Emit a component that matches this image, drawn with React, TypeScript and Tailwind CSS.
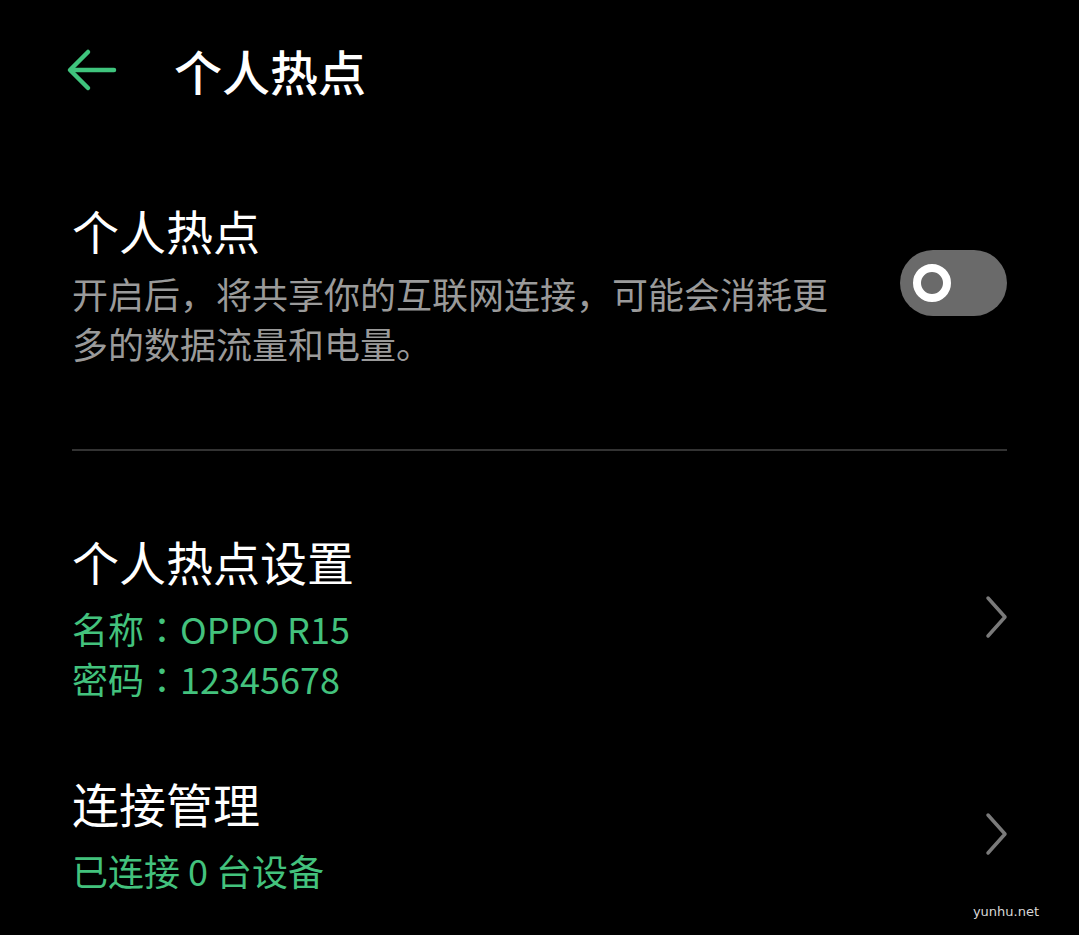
const font = { fontFamily: '"Noto Sans CJK SC", "Noto Sans", sans-serif' };
const tc = { fontFamily: '"Noto Sans CJK TC", sans-serif' };

function Toggle() {
  return (
    <div className="w-[107px] h-[66px] rounded-full bg-[#6a6a6a] flex items-center pl-[13px] shrink-0">
      <div className="w-[38px] h-[38px] rounded-full border-[8px] border-white" />
    </div>
  );
}

function Chevron() {
  return (
    <svg width="26" height="44" viewBox="0 0 26 44" fill="none" stroke="#7a7a7a" strokeWidth="3.5" strokeLinecap="round" strokeLinejoin="round" className="shrink-0 mr-[-3px]">
      <path d="M4 3L21 22L4 41" />
    </svg>
  );
}

function NavRow({ title, lines }: { title: string; lines: { label: string; value: string }[] }) {
  return (
    <div className="flex items-center justify-between">
      <div>
        <div className="text-[47px] leading-[60px] text-white">{title}</div>
        <div className="mt-[12px]">
          {lines.map((l) => (
            <div key={l.value} className="text-[36px] leading-[50px] text-[#43c27d]">
              {l.label}
              {l.label && <span style={tc}>：</span>}
              {l.value}
            </div>
          ))}
        </div>
      </div>
      <Chevron />
    </div>
  );
}

export default function App() {
  return (
    <div className="w-[1079px] h-[935px] bg-black relative overflow-hidden" style={font}>
      {/* Header */}
      <header className="flex items-center h-[142px] pl-[64px] pb-[2px]">
        <svg width="56" height="44" viewBox="0 0 56 44" fill="none" stroke="#3fc47d" strokeWidth="4.5" strokeLinecap="round" strokeLinejoin="round">
          <path d="M50 22H7" />
          <path d="M24 4L6 22L24 40" />
        </svg>
        <h1 className="ml-[54px] text-[48px] leading-none text-white font-medium">个人热点</h1>
      </header>

      <div className="px-[72px]">
        {/* Hotspot switch */}
        <section className="flex items-center justify-between pt-[56px] pb-[81px]">
          <div className="w-[765px]">
            <div className="text-[47px] leading-[64px] text-white">个人热点</div>
            <p className="text-[36px] leading-[50px] text-[#9a9a9a] mt-[6px]">
              开启后，将共享你的互联网连接，可能会消耗更多的数据流量和电量。
            </p>
          </div>
          <Toggle />
        </section>

        <div className="h-[2px] bg-[#333333]" />

        <div className="pt-[80px] flex flex-col gap-[70px]">
          <NavRow
            title="个人热点设置"
            lines={[
              { label: '名称', value: 'OPPO R15' },
              { label: '密码', value: '12345678' },
            ]}
          />
          <NavRow title="连接管理" lines={[{ label: '', value: '已连接 0 台设备' }]} />
        </div>
      </div>

      <span
        className="absolute right-[40px] bottom-[14px] text-[13px] text-[#d8d8d8]"
        style={{ fontFamily: '"DejaVu Sans", sans-serif' }}
      >
        yunhu.net
      </span>
    </div>
  );
}
